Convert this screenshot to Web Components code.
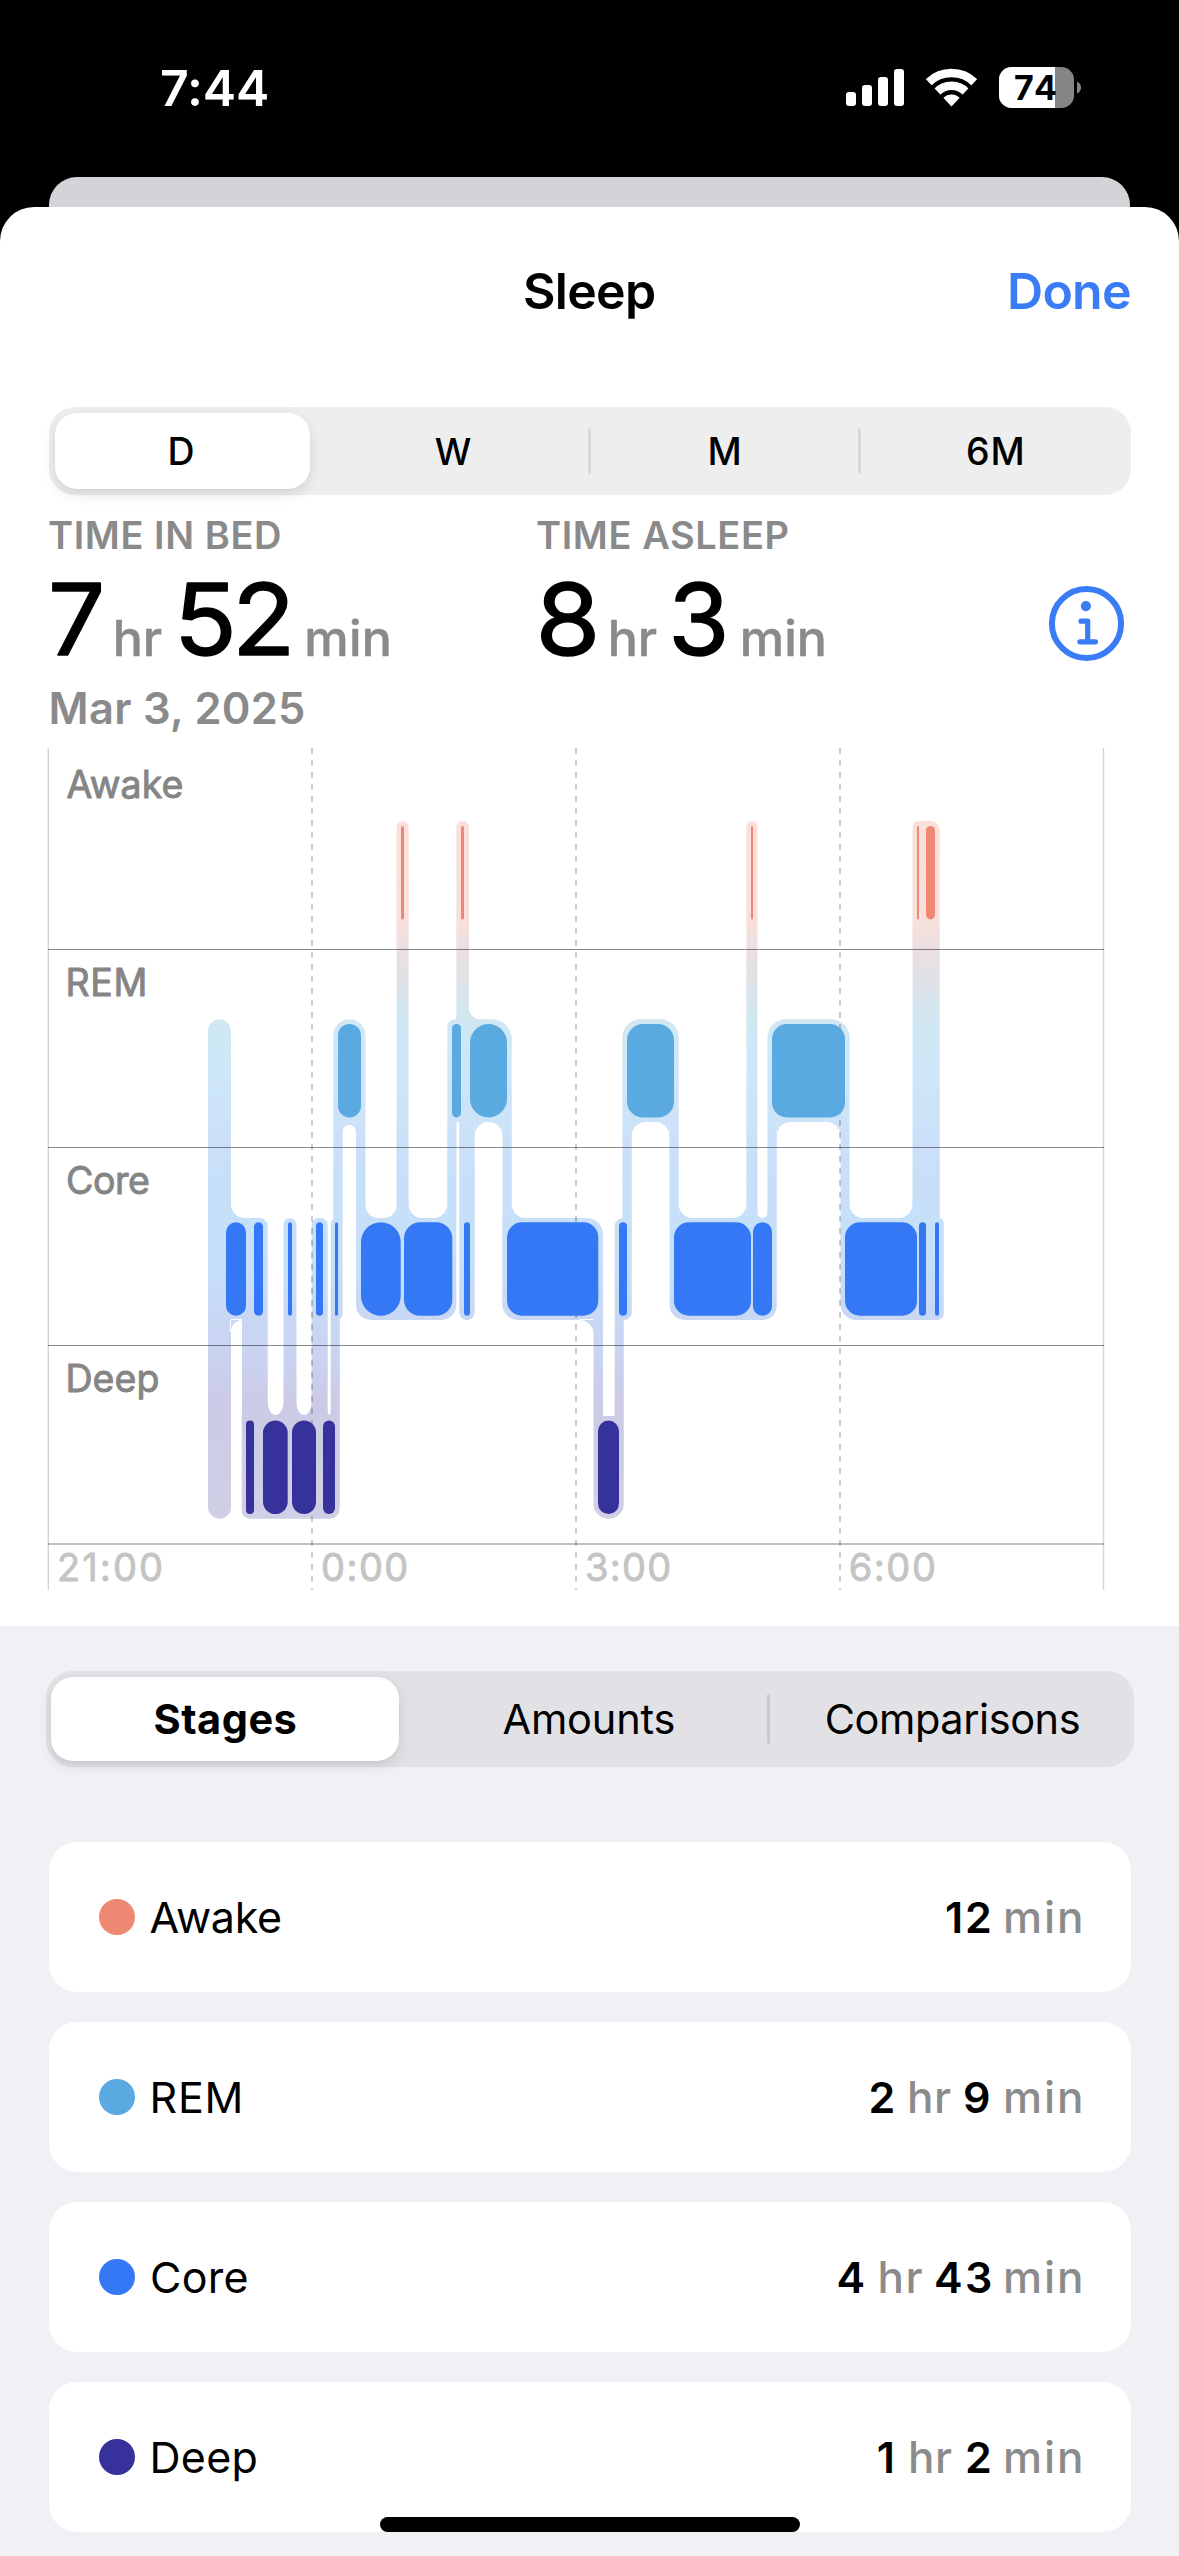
<!DOCTYPE html>
<html lang="en">
<head>
<meta charset="utf-8">
<title>Sleep</title>
<style>
html,body{margin:0;padding:0;background:#000}
body{width:1179px;height:2556px;overflow:hidden;font-family:Inter,"Liberation Sans",sans-serif}
</style>
</head>
<body>
<sleep-app></sleep-app>
<script>
const FAMILY = "Inter,'Liberation Sans',sans-serif";
const pen = document.createElement('canvas').getContext('2d');

// Tracking and left bearing that make a run of text span exactly inkWidth.
function fitRun(text, size, weight, inkWidth) {
  pen.font = `${weight} ${size}px ${FAMILY}`;
  const m = pen.measureText(text);
  const ink = m.actualBoundingBoxLeft + m.actualBoundingBoxRight;
  const gaps = text.length - 1;
  return { ls: gaps ? (inkWidth - ink) / gaps : 0, left: m.actualBoundingBoxLeft };
}

// SVG text whose glyphs start at x and span w; a thin round stroke softens the corners.
function label(text, x, y, w, size, weight, fill, stroke = 0, stretch = 1) {
  const f = fitRun(text, size, weight, (w - stroke) / stretch);
  return `<text transform="translate(${(x + stroke / 2 + f.left * stretch).toFixed(2)} ${y}) scale(${stretch} 1)" style="font:${weight} ${size}px ${FAMILY};letter-spacing:${f.ls.toFixed(3)}px" fill="${fill}" stroke="${stroke ? fill : 'none'}" stroke-width="${stroke}" stroke-linejoin="round">${text}</text>`;
}

class Base extends HTMLElement {
  connectedCallback() {
    if (!this.shadowRoot) this.attachShadow({ mode: 'open' }).innerHTML = this.render();
    if (this.ready) this.ready();
  }
}

class FitText extends Base {
  render() { return `<style>:host{display:block;flex:none;white-space:nowrap}span{display:block}</style><span><slot></slot></span>`; }
  ready() {
    const size = +this.getAttribute('size'), weight = this.getAttribute('weight') || 400, w = +this.getAttribute('w');
    const f = fitRun(this.textContent, size, weight, w);
    this.style.width = w + 'px';
    const s = this.shadowRoot.querySelector('span');
    s.style.cssText = `font-size:${size}px;font-weight:${weight};line-height:${size}px;letter-spacing:${f.ls}px;margin-left:${f.left}px`;
  }
}
customElements.define('fit-text', FitText);

class StatusBar extends Base {
  render() { return `<style>
    :host{display:flex;height:177px;box-sizing:border-box;padding:0 98px 0 162px;color:#fff;justify-content:space-between;align-items:flex-start}
    fit-text{margin-top:63px}
    svg{display:block;margin-top:55px}
  </style>
  <fit-text size="50" weight="600" w="105">7:44</fit-text>
  <svg width="251" height="65" viewBox="830 55 251 65">
    <g fill="#fff"><rect x="846" y="92" width="10" height="14" rx="3"/><rect x="862" y="85" width="10" height="21" rx="3"/><rect x="878" y="77" width="10" height="29" rx="3"/><rect x="894" y="69" width="10" height="37" rx="3"/></g>
    <clipPath id="w"><path d="M951.5 106.5L926.2 79.5V60H976.8V79.5Z"/></clipPath>
    <g clip-path="url(#w)"><circle cx="951.5" cy="106" r="33" fill="none" stroke="#fff" stroke-width="8.4"/><circle cx="951.5" cy="106" r="20.2" fill="none" stroke="#fff" stroke-width="8.4"/><circle cx="951.5" cy="106" r="11.5" fill="#fff"/></g>
    <clipPath id="b"><rect x="999" y="67" width="75" height="41" rx="12.5"/></clipPath>
    <g clip-path="url(#b)"><rect x="999" y="67" width="75" height="41" fill="#858585"/><rect x="999" y="67" width="56" height="41" fill="#fff"/></g>
    <path d="M1077 81.5q4 2 4 6t-4 6z" fill="#858585"/>
    ${label('74', 1015, 100, 41, 34, 700, '#000')}
  </svg>`; }
}
customElements.define('status-bar', StatusBar);

class SegmentedControl extends Base {
  render() { return `<style>
    :host{display:flex;box-sizing:border-box;position:relative}
    ::slotted(*){flex:1 1 0}
  </style><slot></slot>`; }
}
customElements.define('segmented-control', SegmentedControl);

class SegmentItem extends Base {
  render() {
    return `<style>
    :host{display:flex;min-width:0;align-items:center;justify-content:center;position:relative}
    .thumb{flex:1;align-self:stretch;display:flex;align-items:center;justify-content:center;border-radius:22px}
    ::slotted(*){padding-top:1.5px}
    :host([on]) .thumb{background:#fff;margin:6px var(--gap-r,9px) 6px var(--gap-l,6px);box-shadow:0 5px 14px rgba(0,0,0,.11),0 1px 2px rgba(0,0,0,.03)}
    :host([rule])::after{content:"";position:absolute;right:var(--rule-x,-1px);top:24%;bottom:24%;width:3px;border-radius:2px;background:var(--rule)}
    </style><div class="thumb"><slot></slot></div>`;
  }
}
customElements.define('segment-item', SegmentItem);

class SleepSummary extends Base {
  render() {
    const g = '#8a8a8a', B = 99;
    const num = (t, x, w, s) => label(t, x, 80.4, w, B, 400, '#000', 1.4, s);
    const unit = (t, x, w) => label(t, x, 81.2, w, 50, 500, g, .5);
    return `<style>
    :host{display:block;height:253px;padding-left:50px;color:${g}}
    .heads{display:grid;grid-template-columns:488px 1fr;height:80px;align-items:center}
    .heads fit-text{margin-left:-1px}
    .vals{display:flex;height:97px;align-items:center}
    svg{display:block;flex:none;overflow:visible}
    .date{display:flex;align-items:center;height:72px;padding:1px 0 0 1.5px;box-sizing:border-box}
    </style>
    <div class="heads"><fit-text size="38" weight="560" w="231">TIME IN BED</fit-text><fit-text size="38" weight="560" w="250.5">TIME ASLEEP</fit-text></div>
    <div class="vals">
      <svg width="488" height="97" viewBox="50 0 488 97">${num('7', 51.3, 50, 1.02)}${unit('hr', 115.6, 46.4)}${num('52', 180.5, 109, 1.05)}${unit('min', 307, 82)}</svg>
      <svg width="510" height="97" viewBox="538 0 510 97">${num('8', 540, 54.5, 1.06)}${unit('hr', 610.6, 46.4)}${num('3', 673.5, 52, 1)}${unit('min', 742.5, 81.6)}</svg>
      <svg width="77" height="77" viewBox="-38.5 -38.5 77 77" fill="none" stroke="#3a7cf5" stroke-linecap="round" stroke-linejoin="round"><circle r="34.6" stroke-width="6"/><circle cx="-.6" cy="-17.4" r="5.1" fill="#3a7cf5" stroke="none"/><path d="M-5.5-1.8H1.2V18.8M-6.6 18.8H9" stroke-width="5.2" transform="translate(0 -.5)"/></svg>
    </div>
    <div class="date"><fit-text size="43.5" weight="560" w="253.5">Mar 3, 2025</fit-text></div>`;
  }
}
customElements.define('sleep-summary', SleepSummary);

class SleepChart extends Base {
  render() {
    const top = { awake: 826, rem: 1024, core: 1222.3, deep: 1420.6 };
    const color = { awake: '#ef8872', rem: '#5aa9e0', core: '#3478f6', deep: '#36319b' };
    const stages = {
      awake: [[401,404],[461,464],[751,753],[917,919],[926,935]],
      rem: [[338,361],[452,461],[470,507],[627,674],[772,845]],
      core: [[226,246],[254,263],[288,292],[316,323],[335,338],[361,400.7],[404,452.3],[464,470],[507,598.3],[619,627],[674,751],[753,772],[845,917],[919,926],[935,939]],
      deep: [[246,254],[263,287.7],[292,316],[323,335],[598,619]]
    };
    const bars = Object.entries(stages).map(([k, list]) => list.map(([a, b]) => {
      const w = b - a, r = Math.min(w / 2, w < 42 ? 20 : w < 50 ? 16 : 15);
      return `<rect x="${a}" y="${top[k]}" width="${w}" height="93.4" rx="${r}" fill="${color[k]}"/>`;
    }).join('')).join('');
    // Rectangle with separate corner radii: top-left, top-right, bottom-right, bottom-left.
    const R = (x1, y1, x2, y2, a = 0, b = 0, c = 0, d = 0) =>
      `M${x1 + a} ${y1}H${x2 - b}a${b} ${b} 0 0 1 ${b} ${b}V${y2 - c}a${c} ${c} 0 0 1 ${-c} ${c}H${x1 + d}a${d} ${d} 0 0 1 ${-d} ${-d}V${y1 + a}a${a} ${a} 0 0 1 ${a} ${-a}Z`;
    const rT = 1019.3, rB = 1122, cT = 1218, cB = 1320, dT = 1415, dB = 1518.7;
    // Round-bottomed gap between two legs that both end on the deep row.
    const cup = (a, b, h) => `M${a - .4} ${dT - h}h.4a${(b - a) / 2} ${h} 0 0 0 ${b - a} 0h.4v${h + 2}h${a - b - .8}z`;
    const halo = [
      R(208, rT, 231, dB, 11.5, 11.5, 11.5, 11.5),
      R(230, cT, 267.7, cB, 0, 8, 0, 0), R(242, cB - 1, 267.7, dT + 1),
      `M230 ${cT - 14}h1a14 14 0 0 0 14 14v1h-15z`, `M230 ${cB + 12}h1a11 12 0 0 1 11 -12v-1h-12z`,
      R(241.7, dT, 339.8, dB, 0, 0, 10, 8),
      R(283.5, cT, 296.5, dT, 6.5, 6.5), R(311.6, cT, 327.7, dT, 7, 7),
      R(330.7, cT, 342.7, cB, 6, 0, 6, 0), R(330.7, cB - 8, 339.8, dT),
      cup(267.7, 283.5, 13), cup(296.5, 311.6, 13), cup(327.7, 330.7, 6),
      R(333.3, rT, 365.5, rB + 3, 16, 16), R(333.3, rB, 342.7, cT + 10), R(356, rB, 365.5, cT + 10),
      R(356, cT, 456.3, cB, 0, 0, 15, 15),
      R(396.5, 821, 408.6, cT + 1, 6, 6), R(447.3, rT, 456.5, cT + 1, 7),
      R(456.3, 821, 469, rT + 2, 6, 6), `M468.8 ${rT - 12}a11.5 12 0 0 0 11.5 12v1h-11.5z`,
      R(456, rT, 511.8, rB, 0, 20), R(459.2, rB - 1, 474.7, cB, 0, 0, 7.5, 7.5), R(502.5, rB - 1, 511.8, cT + 1),
      R(502.3, cT, 603, cB, 0, 16, 0, 16), R(593.5, cT + 20, 603, dT + 4),
      `M579.5 ${cB}a14 14 0 0 1 14 14v-15h-14z`,
      R(593.5, dT + 1, 623.8, dB, 0, 0, 15, 15), R(614.7, cB - 8, 623.8, dT + 4),
      R(614.7, cT, 631.8, cB, 8, 0, 8, 0), R(622.4, rB, 631.8, cT + 10),
      R(622.4, rT, 678.7, rB, 18, 18), R(669.4, rB, 678.7, cT + 1),
      R(669.6, cT, 776.7, cB, 0, 0, 14, 15),
      R(746.4, 821, 757.5, cT + 1, 5.5, 5.5), R(767.4, rB, 776.7, cT + 1),
      R(767.4, rT, 849.6, rB, 18, 18), R(840.5, rB, 849.6, cT + 1),
      R(840.5, cT, 943.8, cB, 0, 5, 6, 16), R(912.5, 821, 939.8, cT + 1, 6, 9)
    ].join('');
    // Fillets where the legs join a bar: u sits on top of the core row, d hangs below the REM row.
    const u = [[365.5,396.5,13],[408.6,447.3,14],[511.8,0,14],[678.7,746.4,14],[849.6,912.5,14],[757.5,767.4,5]].map(([a, b, r]) =>
      `M${a - .3} ${cT - r}h.3a${r} ${r} 0 0 0 ${r} ${r}v.6h${-r - .3}z` + (b ? `M${b + .3} ${cT - r}h-.3a${r} ${r} 0 0 1 ${-r} ${r}v.6h${r + .3}z` : '')).join('');
    const d = [[342.7,356,6.6,3],[474.7,502.5,13.5,0],[631.8,669.4,14,0],[776.7,840.5,14,0]].map(([a, b, r, o]) =>
      `M${a - .3} ${rB + o + r}h.3a${r} ${r} 0 0 1 ${r} ${-r}v-.6h${-r - .3}z M${b + .3} ${rB + o + r}h-.3a${r} ${r} 0 0 0 ${-r} ${-r}v-.6h${r + .3}z`).join('');
    const stops = [[821,'#fbdfda'],[919,'#f9e0dc'],[949,'#ebdfe1'],[980,'#e0e2e7'],[1008,'#d3e6ef'],[1035,'#cfe8f5'],[1070,'#cee7f8'],[1147,'#cbe0f8'],[1180,'#c7dff9'],[1225,'#c7e0f9'],[1270,'#c5dffb'],[1320,'#c9d7f3'],[1350,'#c9d4f1'],[1400,'#cccbe7'],[1518,'#cfcfe5']];
    const g = '#858585', ax = '#c4c4c4';
    return `<style>:host{display:block;height:878px}svg{display:block}</style>
    <svg width="1179" height="878" viewBox="0 748 1179 878">
      <linearGradient id="g" gradientUnits="userSpaceOnUse" x1="0" y1="821" x2="0" y2="1518">${stops.map(([y, c]) => `<stop offset="${(y - 821) / 697}" stop-color="${c}"/>`).join('')}</linearGradient>
      <g fill="url(#g)"><path d="${halo}"/><path d="${u}"/><path d="${d}"/></g>
      <g stroke="#000" stroke-width="2">
        <path d="M312 748V1590M576 748V1590M840 748V1590" stroke-opacity=".2" stroke-dasharray="6 6"/>
        <path d="M48.3 748V1590M1103.5 748V1590" stroke-opacity=".17" stroke-width="1.4"/>
        <path d="M48 949.5H1104M48 1147.5H1104M48 1345.5H1104" stroke-opacity=".46" stroke-width="1"/>
        <path d="M48 1544H1104" stroke-opacity=".24"/>
      </g>
      ${bars}
      ${label('Awake', 66, 798, 117, 37.5, 400, g, .9)}
      ${label('REM', 68, 996, 77, 37.5, 400, g, .9)}
      ${label('Core', 67.5, 1194, 82, 37.5, 400, g, .9)}
      ${label('Deep', 68, 1392, 91, 37.5, 400, g, .9)}
      ${label('21:00', 58.5, 1581, 103, 38, 400, ax, .8)}
      ${label('0:00', 322.7, 1581, 84, 38, 400, ax, .8)}
      ${label('3:00', 586.7, 1581, 83, 38, 400, ax, .8)}
      ${label('6:00', 850.3, 1581, 84, 38, 400, ax, .8)}
    </svg>`;
  }
}
customElements.define('sleep-chart', SleepChart);

class StageCard extends Base {
  render() { return `<style>
    :host{display:flex;align-items:center;height:150px;box-sizing:border-box;border-radius:28px;background:#fff;padding:0 49.5px 0 50px;color:#000}
    i{width:36px;height:36px;border-radius:50%;background:var(--dot);margin-right:16px;flex:none}
    .v{margin-left:auto;display:flex;align-items:center}
  </style><i></i><slot name="name"></slot><div class="v"><slot></slot></div>`; }
}
customElements.define('stage-card', StageCard);

class SleepApp extends Base {
  render() {
    const n = (t, w, gap) => `<fit-text size="43" weight="600" w="${w}" style="margin-right:${gap}px">${t}</fit-text>`;
    const un = (t, w, gap = 0) => `<fit-text class="u" size="44" weight="450" w="${w}" style="margin-right:${gap}px">${t}</fit-text>`;
    const card = (name, w, dot, vals, dx = 2.5) => `<stage-card style="--dot:${dot}"><fit-text slot="name" size="43" w="${w}" style="margin-left:${dx - .5}px">${name}</fit-text>${vals}</stage-card>`;
    return `<style>
    :host{display:flex;flex-direction:column;width:1179px;height:2556px;position:relative;background:#000;overflow:hidden}
    .back{height:30px;margin:0 49px;background:#d4d3d8;border-radius:28px 28px 0 0;flex:none}
    .sheet{flex:1;background:#fff;border-radius:34px 34px 0 0;overflow:hidden;display:flex;flex-direction:column}
    header{display:grid;grid-template-columns:1fr auto 1fr;align-items:center;height:168px;padding:0 49px;margin-bottom:32px;color:#000;flex:none}
    header .done{justify-self:end;color:#3a7cf5;grid-column:3}
    header .t{grid-column:2;padding-left:1px}
    .range{height:88px;margin:0 48.5px;background:#eeeeef;border-radius:26px;--rule:#d9d9da;flex:none;color:#000}
    .lower{flex:1;background:#f1f0f5;padding-top:45px}
    .tabs{height:96px;margin:0 45.5px;background:#e2e1e6;border-radius:27px;--rule:#cacace;--rule-x:1px;--gap-l:5.5px;--gap-r:9px;color:#000}
    .cards{display:flex;flex-direction:column;gap:30px;margin:75px 48.5px 0}
    .u{color:#8b8b8b}
    .home{position:absolute;left:380px;bottom:24px;width:420px;height:15px;border-radius:8px;background:#000}
    </style>
    <status-bar></status-bar>
    <div class="back"></div>
    <div class="sheet">
      <header><fit-text class="t" size="50" weight="600" w="130">Sleep</fit-text><fit-text class="done" size="50" weight="600" w="120">Done</fit-text></header>
      <segmented-control class="range">
        <segment-item on><fit-text size="37.5" weight="500" w="23.6">D</fit-text></segment-item>
        <segment-item rule><fit-text size="36.5" weight="500" w="39">W</fit-text></segment-item>
        <segment-item rule><fit-text size="37.5" weight="500" w="28.6">M</fit-text></segment-item>
        <segment-item><fit-text size="37.5" weight="500" w="54.5">6M</fit-text></segment-item>
      </segmented-control>
      <sleep-summary></sleep-summary>
      <sleep-chart></sleep-chart>
      <div class="lower">
        <segmented-control class="tabs">
          <segment-item on><fit-text size="41.5" weight="700" w="141">Stages</fit-text></segment-item>
          <segment-item rule><fit-text size="41.5" weight="400" w="170" style="margin-right:2px">Amounts</fit-text></segment-item>
          <segment-item><fit-text size="41.5" weight="400" w="252" style="margin-left:1px">Comparisons</fit-text></segment-item>
        </segmented-control>
        <div class="cards">
          ${card('Awake', 129.5, '#ef8872', n('12', 44, 16) + un('min', 75), 0.5)}
          ${card('REM', 88, '#5aa9e0', n('2', 23.5, 16) + un('hr', 41, 14) + n('9', 25, 16) + un('min', 75))}
          ${card('Core', 94.5, '#3478f6', n('4', 26, 16) + un('hr', 42, 13.5) + n('43', 55, 15) + un('min', 75), 2)}
          ${card('Deep', 104, '#36319b', n('1', 16, 17.3) + un('hr', 41, 15) + n('2', 23, 16) + un('min', 75))}
        </div>
      </div>
    </div>
    <div class="home"></div>`;
  }
}
customElements.define('sleep-app', SleepApp);
</script>
</body>
</html>
